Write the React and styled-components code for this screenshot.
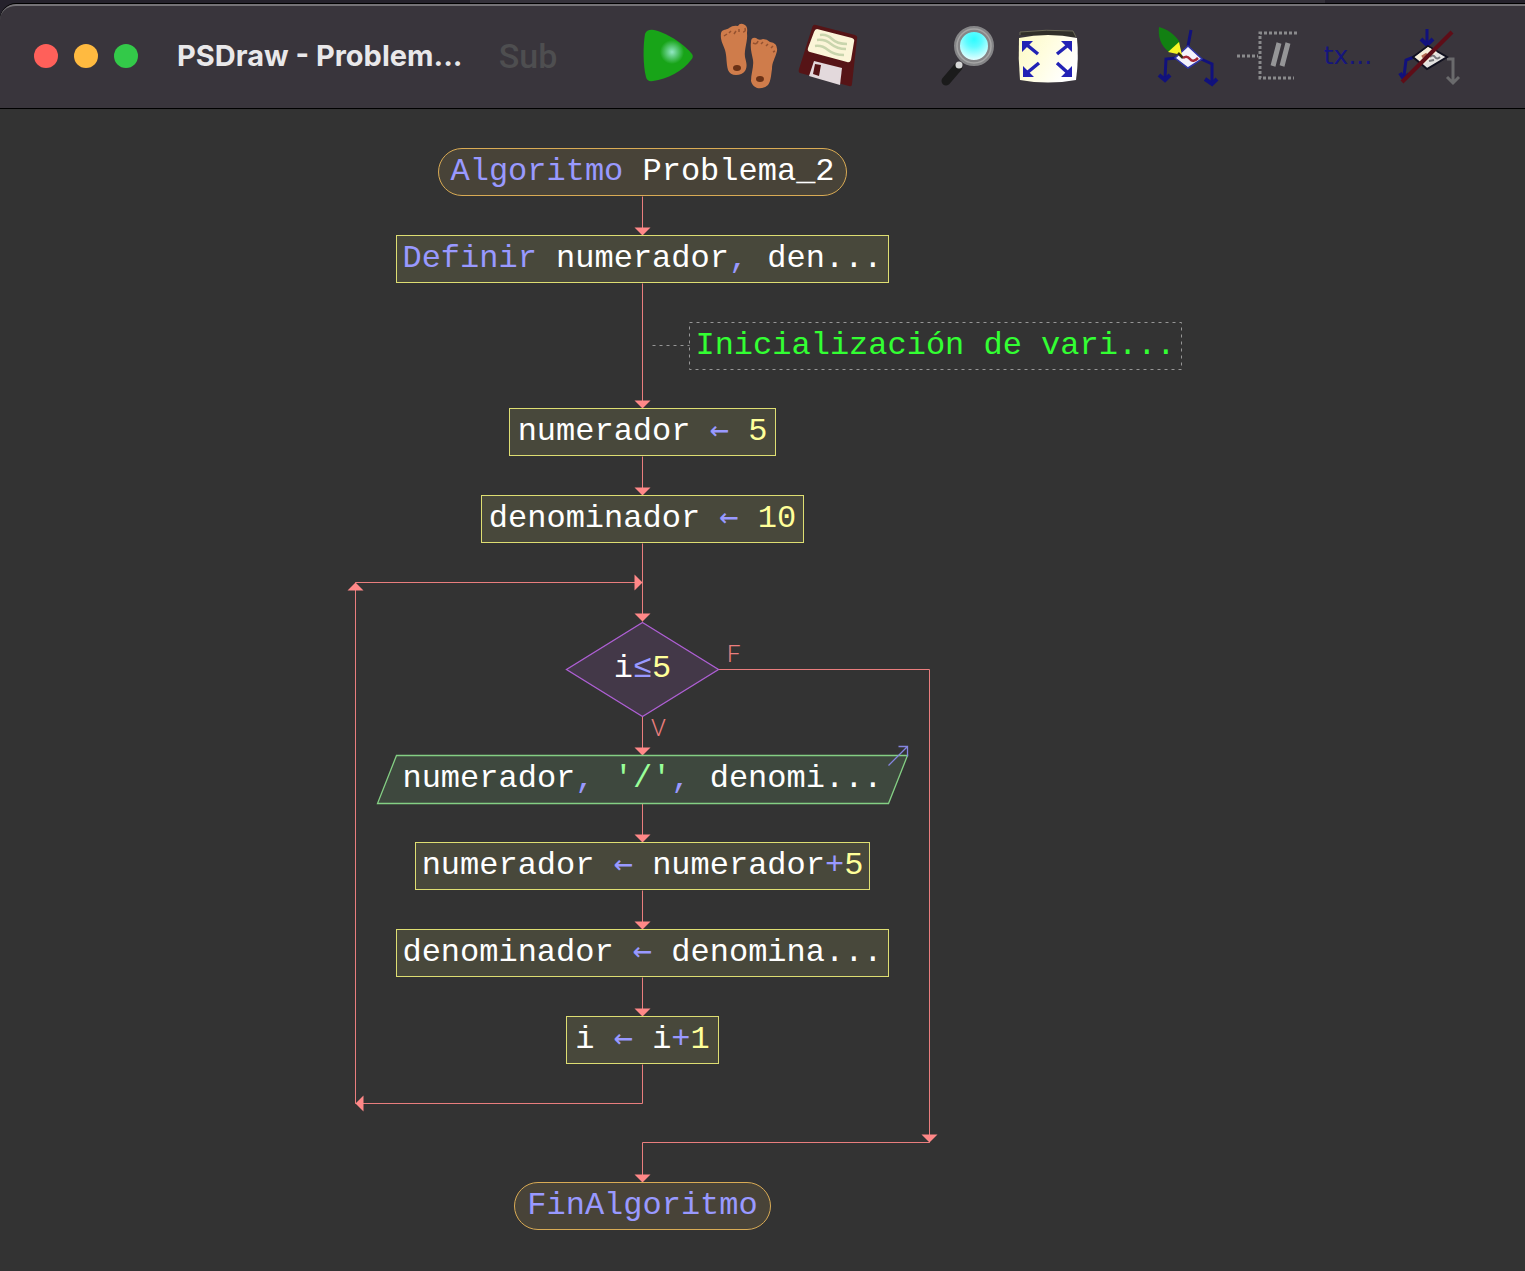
import React from "react";
import styled, { createGlobalStyle, css } from "styled-components";

const GlobalStyle = createGlobalStyle`
  *, *::before, *::after { box-sizing: border-box; }
  body { margin: 0; background: #25222c; }
`;

const colors = {
  keyword: "#9999ff",
  plain: "#ffffff",
  number: "#ffff99",
  string: "#99ff99",
  comment: "#33ff33",
  wire: "#ea7e7e",
  arrow: "#ff8888",
};

const Screen = styled.div`
  display: flex;
  flex-direction: column;
  min-height: 100vh;
  background: #25222c;
`;

const Backdrop = styled.div`
  height: 3px;
  margin: 0 200px 0 470px;
  background: #35323b;
`;

const Window = styled.main`
  display: flex;
  flex: 1;
  flex-direction: column;
  overflow: hidden;
  border-top: 1px solid #000;
  border-top-left-radius: 16px;
  background: #333333;
`;

const TitleBar = styled.header`
  display: flex;
  align-items: center;
  gap: 35px;
  height: 105px;
  padding: 0 34px 2px;
  border-top: 2px solid #757377;
  border-top-left-radius: 16px;
  border-bottom: 1px solid #000;
  background: #39353c;
`;

const Lights = styled.div`
  display: flex;
  gap: 16px;
  margin-right: 4px;
`;

const Light = styled.button`
  width: 24px;
  height: 24px;
  padding: 0;
  border: 0;
  border-radius: 50%;
  background: ${(p) => p.$color};
`;

const Title = styled.h1`
  width: 286px;
  margin: 0;
  color: #e9e8ea;
  font: 700 29px/36px Inter, sans-serif;
  white-space: nowrap;
`;

const Toolbar = styled.div`
  display: flex;
  gap: 80px;
`;

const ToolGroup = styled.div`
  display: flex;
  gap: 20px;
`;

const ToolButton = styled.button`
  display: flex;
  align-items: center;
  justify-content: center;
  width: 60px;
  height: 60px;
  padding: 0;
  border: 0;
  background: transparent;
  white-space: nowrap;
`;

const SubLabel = styled.span`
  color: #4e4e50;
  font: 500 34px/60px Roboto, sans-serif;
`;

const TextLabel = styled.span`
  color: #15157c;
  font: 400 25px/60px "DejaVu Sans", sans-serif;
`;

const Icon = styled.svg`
  display: block;
  width: 60px;
  height: 60px;
  overflow: visible;
`;

const Canvas = styled.section`
  position: relative;
  flex: 1;
  min-height: 1162px;
  overflow: hidden;
  background: #333333;
`;

const Drawing = styled.svg`
  position: absolute;
  inset: 0;
  width: 100%;
  height: 100%;
`;

const kinds = {
  terminal: css`
    border: 1px solid #d9ab55;
    border-radius: 24px;
    background: #484338;
  `,
  process: css`
    border: 1px solid #dede72;
    background: #48483b;
  `,
  drawn: css`
    border: 1px solid transparent;
  `,
};

const Node = styled.div`
  position: absolute;
  left: ${(p) => p.$x}px;
  top: ${(p) => p.$y}px;
  width: ${(p) => p.$w}px;
  height: 48px;
  ${(p) => kinds[p.$kind]}
  color: ${colors.plain};
  font: 400 32px/46px "Liberation Mono", monospace;
  text-align: center;
  white-space: pre;
`;

const Token = styled.span`
  color: ${(p) => colors[p.$type]};
`;

const AssignToken = styled.span`
  color: ${colors.keyword};
  font: 400 32px/16px "DejaVu Sans Mono", monospace;
`;

const BranchLabel = styled.span`
  position: absolute;
  left: ${(p) => p.$x}px;
  top: ${(p) => p.$y}px;
  color: ${colors.wire};
  font: 300 24px/26px Roboto, sans-serif;
`;

const nodes = [
  { kind: "terminal", x: 438, y: 39, w: 409, code: [["keyword", "Algoritmo"], ["plain", " Problema_2"]] },
  { kind: "process", x: 396, y: 126, w: 493, code: [["keyword", "Definir"], ["plain", " numerador"], ["keyword", ","], ["plain", " den..."]] },
  { kind: "drawn", x: 689, y: 213, w: 493, code: [["comment", "Inicialización de vari..."]] },
  { kind: "process", x: 509, y: 299, w: 267, code: [["plain", "numerador "], ["assign", "←"], ["number", " 5"]] },
  { kind: "process", x: 481, y: 386, w: 323, code: [["plain", "denominador "], ["assign", "←"], ["number", " 10"]] },
  { kind: "drawn", x: 566, y: 536, w: 153, code: [["plain", "i"], ["keyword", "≤"], ["number", "5"]] },
  { kind: "drawn", x: 396, y: 646, w: 493, code: [["plain", "numerador"], ["keyword", ","], ["string", " '/'"], ["keyword", ","], ["plain", " denomi..."]] },
  { kind: "process", x: 415, y: 733, w: 455, code: [["plain", "numerador "], ["assign", "←"], ["plain", " numerador"], ["keyword", "+"], ["number", "5"]] },
  { kind: "process", x: 396, y: 820, w: 493, code: [["plain", "denominador "], ["assign", "←"], ["plain", " denomina..."]] },
  { kind: "process", x: 566, y: 907, w: 153, code: [["plain", "i "], ["assign", "←"], ["plain", " i"], ["keyword", "+"], ["number", "1"]] },
  { kind: "terminal", x: 514, y: 1073, w: 257, code: [["keyword", "FinAlgoritmo"]] },
];

const wires = [
  "M642 87V126",
  "M642 174V299",
  "M642 347V386",
  "M642 434V512",
  "M642 607V646",
  "M642 694V733",
  "M642 781V820",
  "M642 868V907",
  "M642 955V994H355V473H642",
  "M718 560H929V1033H642V1073",
];

const arrows = [
  [642, 126, 0],
  [642, 299, 0],
  [642, 386, 0],
  [642, 512, 0],
  [642, 646, 0],
  [642, 733, 0],
  [642, 820, 0],
  [642, 907, 0],
  [642, 1073, 0],
  [929, 1033, 0],
  [355, 994, 90],
  [355, 473, 180],
  [642, 473, 270],
];

function Wiring() {
  return (
    <Drawing aria-hidden="true">
      <g transform="translate(.5 .5)" fill="none">
        {wires.map((d) => (
          <path key={d} d={d} stroke={colors.wire} />
        ))}
        {arrows.map(([x, y, turn]) => (
          <path key={`${x}-${y}-${turn}`} d="M0 0L-8 -8H8Z" fill={colors.arrow} transform={`translate(${x} ${y}) rotate(${turn})`} />
        ))}
        <path d="M689 213H1181V260H689ZM652 236H689" stroke="#969696" strokeDasharray="3 4" />
        <path d="M642 513L718 560L642 607L566 560Z" fill="#433848" stroke="#ae5fd4" strokeWidth="1.3" />
        <path d="M396 646H907L888 694H377Z" fill="#3e483e" stroke="#84cf84" strokeWidth="1.3" />
        <path d="M888 656L907 637M898 637H907V647" stroke="#8585e0" strokeWidth="1.3" />
      </g>
    </Drawing>
  );
}

const PlayIcon = () => (
  <Icon viewBox="0 0 60 60">
    <defs>
      <radialGradient id="shine" cx="34" cy="26" r="12" gradientUnits="userSpaceOnUse" gradientTransform="rotate(35 34 26)">
        <stop offset="0" stopColor="#92e8c4" />
        <stop offset=".4" stopColor="#60cc80" />
        <stop offset="1" stopColor="#18a418" />
      </radialGradient>
    </defs>
    <path d="M7 8Q9 3 16 4C32 8 48 20 54 28Q56 31 53 34C45 45 29 53 15 55Q9 56 8 51C5 39 5 20 7 8Z" fill="url(#shine)" />
  </Icon>
);

const FeetIcon = () => (
  <Icon viewBox="0 0 60 60">
    <g fill="#cf7c4b">
      <path d="M3 7C4 3 9 4 11 2Q15 -1 20 0Q22 -4 27 -1Q30 1 29 7C30 15 26 23 27 31C28 36 30 40 27 45Q24 49 18 49Q12 49 10 44C8 36 9 31 7 24C5 18 2 14 3 7Z" />
      <path d="M33 16Q33 11 38 12Q41 15 45 13Q49 13 52 16Q60 17 59 25C57 33 54 36 54 43C53 49 53 55 50 59Q46 63 39 62Q34 60 33 55C33 47 36 41 35 34C34 28 32 23 33 16Z" />
    </g>
    <g fill="none" stroke="#955230" strokeWidth="1.5">
      <path d="M6 10L9 8M11 7L13 5M16 8L18 5M21 6V3M25 6Q28 6 27 2" />
      <path d="M35 17Q39 19 40 15M43 18L45 16M48 20L50 18M53 22L55 20M55 26L57 25" />
    </g>
    <ellipse cx="19" cy="42" rx="4" ry="3" fill="#6b3216" />
    <ellipse cx="42" cy="53" rx="4" ry="3" fill="#6b3216" />
  </Icon>
);

const SaveIcon = () => (
  <Icon viewBox="0 0 60 60">
    <path d="M18 -1L57 9Q60 10 59 13L54 58Q54 61 51 60L2 47Q0 46 1 43L14 2Q15 -2 18 -1Z" fill="#561416" />
    <path d="M19 3L54 12Q57 13 56 16L53 34Q52 37 49 36L12 26Q9 25 10 22L16 6Q17 3 19 3Z" fill="#fbf5d8" />
    <path d="M22 9Q29 8 34 13T49 18M19 14Q27 13 33 18T48 23M17 20Q24 19 30 24T46 29" fill="none" stroke="#c9d5ad" strokeWidth="2.5" />
    <path d="M16 35L44 42L42 59L11 50Z" fill="#e3d9dc" />
    <path d="M17 38L23 39L21 50L15 48Z" fill="#561416" />
  </Icon>
);

const ZoomIcon = () => (
  <Icon viewBox="0 0 60 60">
    <defs>
      <radialGradient id="lens" cx=".5" cy=".3" r=".65">
        <stop offset="0" stopColor="#2dfcff" />
        <stop offset=".35" stopColor="#5dfbff" />
        <stop offset="1" stopColor="#f2ffff" />
      </radialGradient>
    </defs>
    <path d="M20 41L8 55" stroke="#1b1b1b" strokeWidth="9" strokeLinecap="round" />
    <circle cx="36" cy="20" r="17" fill="url(#lens)" stroke="#858587" strokeWidth="6" />
    <circle cx="36" cy="20" r="17" fill="none" stroke="#a5a5a5" strokeWidth="1.5" />
    <circle cx="21" cy="39" r="3.5" fill="#d6d6d6" />
  </Icon>
);

const FitIcon = () => (
  <Icon viewBox="0 0 60 60">
    <defs>
      <linearGradient id="sheet" x2="1" y2=".5">
        <stop offset="0" stopColor="#fcfac5" />
        <stop offset=".5" stopColor="#fffddf" />
        <stop offset="1" stopColor="#ffffff" />
      </linearGradient>
    </defs>
    <path d="M2 9V6Q28 3 55 5L58 11" fill="#302f29" stroke="#696856" />
    <path d="M1 12Q30 6 59 12Q61 32 58 54Q30 59 2 54Q0 33 1 12Z" fill="url(#sheet)" />
    <g fill="#2222b5" stroke="#2222b5">
      <path d="M4 15H15L4 26ZM54 15V26L43 15ZM5 51V40L16 51ZM54 51H43L54 40Z" stroke="none" />
      <path d="M9 19L20 28M49 20L39 28M10 46L21 37M49 46L39 37" strokeWidth="3.5" fill="none" />
    </g>
  </Icon>
);

const EditIcon = () => (
  <Icon viewBox="0 0 60 60">
    <g fill="none" stroke="#11117c" strokeWidth="3">
      <path d="M33 4L30 20M18 32L8 33L7 52M43 33L54 38V56" />
      <path d="M1 49L7 54L12 49M47 53L54 58L59 53" strokeWidth="4" />
    </g>
    <path d="M30 20L44 33L30 42L17 32Z" fill="#f4f2fc" stroke="#3035a5" strokeWidth="1.5" />
    <path d="M1 1C9 3 18 9 22 17L11 26C2 19 0 10 1 1Z" fill="#128012" />
    <path d="M21 16L24 29L10 26Z" fill="#f6f626" />
    <path d="M20 27L25 32" stroke="#332b12" strokeWidth="2.5" />
    <path d="M25 32Q29 29 32 33T40 32" fill="none" stroke="#a52836" strokeWidth="2.5" />
  </Icon>
);

const CommentIcon = () => (
  <Icon viewBox="0 0 60 60">
    <path d="M-1 30H20M59 7H22V52H56" fill="none" stroke="#8a8a8c" strokeWidth="3" strokeDasharray="3 2" />
    <path d="M41 17L35 40M50 17L44 40" stroke="#959597" strokeWidth="5" />
  </Icon>
);

const NoCommandIcon = () => (
  <Icon viewBox="0 0 60 60">
    <g fill="none" stroke="#11117c" strokeWidth="3">
      <path d="M29 3V17M16 31L8 34L6 50" />
      <path d="M23 13L29 19L35 13M2 47L6 53L11 48" strokeWidth="4" />
    </g>
    <path d="M49 33H55V56M49 51L55 57L61 51" fill="none" stroke="#6a6a6c" strokeWidth="3" />
    <path d="M30 20L49 31L29 43L15 31Z" fill="#e3e2e0" stroke="#11111f" strokeWidth="2" />
    <path d="M30 21L39 26L26 38L17 31Z" fill="#f7efd9" />
    <path d="M32 31Q35 28 37 31T42 31M31 35L36 34" fill="none" stroke="#77777b" strokeWidth="2" />
    <path d="M24 31L29 28" stroke="#b36a50" strokeWidth="3" />
    <path d="M4 56L54 6" stroke="#5e0d17" strokeWidth="4" />
  </Icon>
);

export default function App() {
  return (
    <Screen>
      <GlobalStyle />
      <Backdrop />
      <Window>
        <TitleBar>
          <Lights>
            <Light type="button" aria-label="Cerrar" $color="#ff605a" />
            <Light type="button" aria-label="Minimizar" $color="#ffba40" />
            <Light type="button" aria-label="Ampliar" $color="#33c949" />
          </Lights>
          <Title>PSDraw - Problem...</Title>
          <Toolbar>
            <ToolGroup>
              <ToolButton type="button"><SubLabel>Sub</SubLabel></ToolButton>
            </ToolGroup>
            <ToolGroup>
              <ToolButton type="button" aria-label="Ejecutar"><PlayIcon /></ToolButton>
              <ToolButton type="button" aria-label="Paso a paso"><FeetIcon /></ToolButton>
              <ToolButton type="button" aria-label="Guardar"><SaveIcon /></ToolButton>
            </ToolGroup>
            <ToolGroup>
              <ToolButton type="button" aria-label="Zoom"><ZoomIcon /></ToolButton>
              <ToolButton type="button" aria-label="Ajustar"><FitIcon /></ToolButton>
            </ToolGroup>
            <ToolGroup>
              <ToolButton type="button" aria-label="Editar"><EditIcon /></ToolButton>
              <ToolButton type="button" aria-label="Comentarios"><CommentIcon /></ToolButton>
              <ToolButton type="button"><TextLabel>tx...</TextLabel></ToolButton>
              <ToolButton type="button" aria-label="Ocultar rama"><NoCommandIcon /></ToolButton>
            </ToolGroup>
          </Toolbar>
        </TitleBar>
        <Canvas>
          <Wiring />
          {nodes.map((node) => (
            <Node key={node.y} $kind={node.kind} $x={node.x} $y={node.y} $w={node.w}>
              {node.code.map(([type, text], i) =>
                type === "assign" ? (
                  <AssignToken key={i}>{text}</AssignToken>
                ) : (
                  <Token key={i} $type={type}>{text}</Token>
                )
              )}
            </Node>
          ))}
          <BranchLabel $x={727} $y={532}>F</BranchLabel>
          <BranchLabel $x={651} $y={606}>V</BranchLabel>
        </Canvas>
      </Window>
    </Screen>
  );
}
